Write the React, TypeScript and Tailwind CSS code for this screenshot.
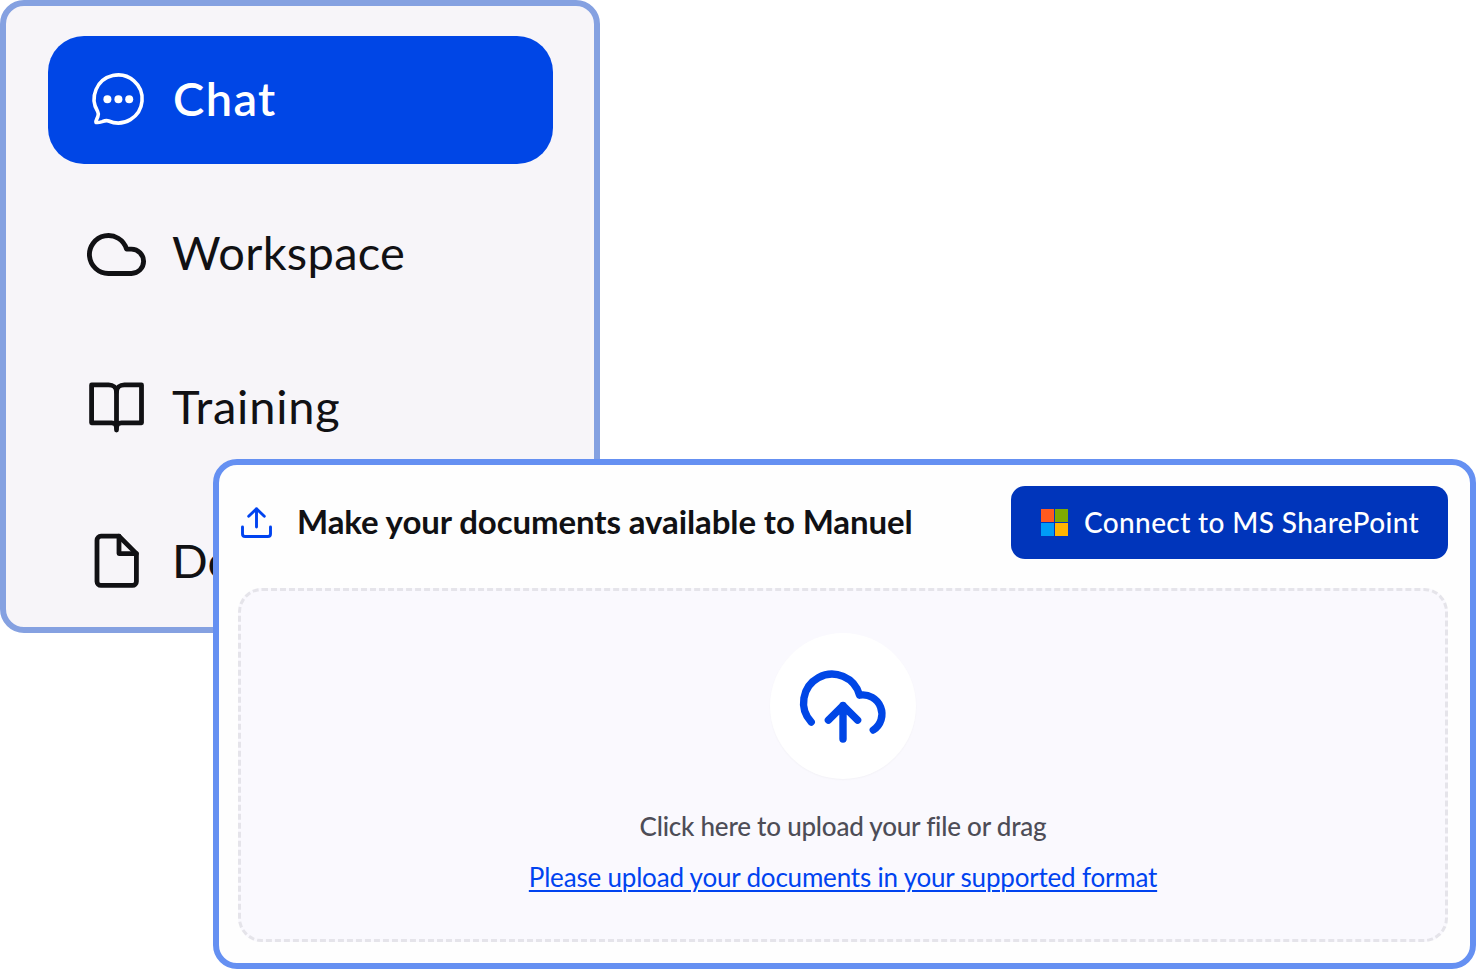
import type { ReactNode } from "react"

// ---------- Icons ----------

function ChatIcon() {
  return (
    <svg width="60" height="60" viewBox="0 0 60 60" fill="none" stroke="currentColor" strokeWidth="3.6" strokeLinejoin="round">
      <path d="M9.6 41.4 A24 24 0 1 1 20.6 51 C18.6 50.2 16.4 50.8 14.2 51.6 C11.8 52.4 9.6 52.8 8 52.4 C7.6 50.6 8.8 49.2 9.8 46.8 C10.6 44.8 10.6 43.2 9.6 41.4 Z" />
      <g fill="currentColor" stroke="none">
        <circle cx="19.4" cy="29.2" r="4" />
        <circle cx="30.4" cy="29.2" r="4" />
        <circle cx="41.2" cy="29.2" r="4" />
      </g>
    </svg>
  )
}

function CloudIcon() {
  return (
    <svg width="65" height="65" viewBox="0 0 24 24" fill="none" stroke="currentColor" strokeWidth="1.8" strokeLinecap="round" strokeLinejoin="round" className="-ml-[4px] flex-shrink-0">
      <path d="M17.5 19H9a7 7 0 1 1 6.71-9h1.79a4.5 4.5 0 1 1 0 9Z" />
    </svg>
  )
}

function BookIcon() {
  return (
    <svg width="60" height="60" viewBox="0 0 60 60" fill="none" stroke="currentColor" strokeWidth="4.8" strokeLinecap="round" strokeLinejoin="round">
      <path d="M28.5 52 V13.7 C28.5 9.8 25.2 6.9 20.6 6.9 H3.6 V44.8 H23.6 C26.6 44.8 28.5 46.8 28.5 49.2" />
      <path d="M28.5 13.7 C28.5 9.8 31.8 6.9 36.4 6.9 H53.5 V44.8 H33.4 C30.4 44.8 28.5 46.8 28.5 49.2" />
    </svg>
  )
}

function FileIcon() {
  return (
    <svg width="60" height="60" viewBox="0 0 60 60" fill="none" stroke="currentColor" strokeWidth="4.8" strokeLinecap="round" strokeLinejoin="round">
      <path d="M31 4.2 H13 a4 4 0 0 0 -4 4 V49.4 a4 4 0 0 0 4 4 H44.4 a4 4 0 0 0 4 -4 V21.6 Z" />
      <path d="M31 4.2 V21.6 H48.4" />
    </svg>
  )
}

function UploadIcon() {
  return (
    <svg width="32" height="32" viewBox="0 0 32 32" fill="none" stroke="currentColor" strokeWidth="2.9" strokeLinecap="round" strokeLinejoin="round">
      <path d="M1.5 19.9 V26.9 a2.6 2.6 0 0 0 2.6 2.6 H26.9 a2.6 2.6 0 0 0 2.6 -2.6 V19.9" />
      <path d="M15.5 20 V1.8 M7.7 9.2 L15.5 1.8 L23.3 9.2" />
    </svg>
  )
}

function CloudUploadIcon() {
  return (
    <svg width="96" height="80" viewBox="0 0 96 80" fill="none" stroke="currentColor" strokeWidth="7.4" strokeLinecap="round" strokeLinejoin="round">
      <path d="M16.2 56 A28.5 28.5 0 1 1 64.6 29.2 A19.1 19.1 0 0 1 78.3 64" />
      <path d="M48 73 V39.4 M33.4 54.2 L48 39.6 L62.6 54.2" />
    </svg>
  )
}

function MicrosoftLogo() {
  return (
    <span className="grid grid-cols-2 gap-px w-[27px] h-[27px] flex-shrink-0">
      <span className="bg-[#ff5a1f]" />
      <span className="bg-[#7faa00]" />
      <span className="bg-[#009cf7]" />
      <span className="bg-[#ffb400]" />
    </span>
  )
}

// ---------- Sidebar ----------

interface NavItemProps {
  icon: ReactNode
  label: string
  active?: boolean
  labelClass: string
}

function NavItem({ icon, label, active = false, labelClass }: NavItemProps) {
  return (
    <a
      className={`flex items-center w-[505px] h-[128px] pl-10 rounded-[36px] text-[47px] leading-none whitespace-nowrap ${active ? "bg-[#0046e6] text-white" : "text-[#111114]"}`}
    >
      <span className="flex w-[60px] flex-shrink-0">{icon}</span>
      <span className={`ml-6 pb-1 ${labelClass}`}>{label}</span>
    </a>
  )
}

function Sidebar() {
  return (
    <nav className="flex flex-col gap-[26px] w-[600px] h-[633px] pt-[30px] pl-[42px] overflow-hidden border-[6px] border-[#85a1e1] rounded-[24px] bg-[#f7f5f9]">
      <NavItem icon={<ChatIcon />} label="Chat" active labelClass="pl-px font-semibold tracking-[1.4px]" />
      <NavItem icon={<CloudIcon />} label="Workspace" labelClass="tracking-[0.3px]" />
      <NavItem icon={<BookIcon />} label="Training" labelClass="tracking-[0.8px]" />
      <NavItem icon={<FileIcon />} label="Documents" labelClass="-ml-px" />
    </nav>
  )
}

// ---------- Upload panel ----------

function UploadPanel() {
  return (
    <section className="absolute left-[213px] top-[459px] w-[1263px] h-[510px] pl-5 pr-[23px] pt-[21px] border-[6px] border-[#6590f2] rounded-[24px] bg-[#fefefe]">
      <div className="flex items-center h-[73px]">
        <span className="text-[#0043f0] ml-[2px]"><UploadIcon /></span>
        <h2 className="ml-6 pb-0.5 text-[33px] leading-none font-bold tracking-[-0.1px] text-[#111114] whitespace-nowrap">
          Make your documents available to Manuel
        </h2>
        <button className="flex items-center ml-auto mr-[-1px] w-[437px] h-[73px] pl-[30px] rounded-[14px] bg-[#0035bb] text-white text-[28px] leading-none whitespace-nowrap">
          <MicrosoftLogo />
          <span className="ml-4 pb-0.5 font-medium tracking-[0.38px]">Connect to MS SharePoint</span>
        </button>
      </div>

      {/* Drop zone */}
      <div className="flex flex-col items-center mt-[29px] -mx-px h-[354px] border-[3px] border-dashed border-[#e5e4ea] rounded-[24px] bg-[#faf9fe]">
        <div className="flex items-center justify-center mt-[42px] w-[146px] h-[146px] rounded-full bg-white text-[#0046e6] shadow-[0_1px_2px_rgba(0,0,0,0.03)]">
          <CloudUploadIcon />
        </div>
        <p className="mt-[34px] text-[26px] leading-[26px] font-medium tracking-[-0.22px] text-[#4d4d57] whitespace-nowrap">
          Click here to upload your file or drag
        </p>
        <a className="mt-[25px] text-[26px] leading-[26px] tracking-[-0.19px] text-[#0043f0] underline decoration-2 underline-offset-[3px] whitespace-nowrap">
          Please upload your documents in your supported format
        </a>
      </div>
    </section>
  )
}

export default function App() {
  return (
    <main className="relative w-[1476px] h-[969px] overflow-hidden bg-white font-[Lato,sans-serif]">
      <Sidebar />
      <UploadPanel />
    </main>
  )
}
